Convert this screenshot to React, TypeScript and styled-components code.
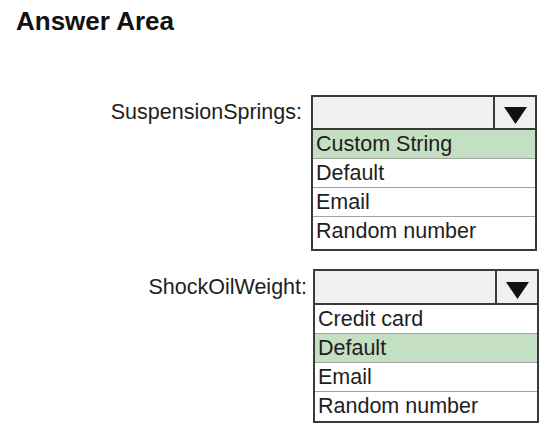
import React from "react";
import styled, { createGlobalStyle } from "styled-components";

const GlobalStyle = createGlobalStyle`
  html, body {
    margin: 0;
    padding: 0;
    background: #ffffff;
  }
  body {
    font-family: "Liberation Sans", Arial, sans-serif;
    color: #1a1a1a;
  }
`;

const Page = styled.div`
  width: 556px;
  height: 434px;
  overflow: hidden;
  background: #ffffff;
`;

const Title = styled.h1`
  margin: 6px 0 0 16px;
  font-size: 26px;
  line-height: 30px;
  font-weight: bold;
  color: #111111;
`;

const Form = styled.div`
  display: flex;
  flex-direction: column;
  gap: 18px;
  padding-top: 59px;
`;

const Field = styled.div<{ $labelWidth: number; $gap: number }>`
  display: grid;
  grid-template-columns: ${(p) => p.$labelWidth}px 226px;
  column-gap: ${(p) => p.$gap}px;
  align-items: center;
`;

const Label = styled.div`
  text-align: right;
  font-size: 21.5px;
  color: #1e1e1e;
  white-space: nowrap;
`;

const Select = styled.div<{ $height: number }>`
  display: flex;
  height: ${(p) => p.$height}px;
  box-sizing: border-box;
  border: 2px solid #3a3a3a;
  background: #f0f0f0;
`;

const SelectValue = styled.div`
  flex: 1;
`;

const SelectButton = styled.div`
  width: 42px;
  border-left: 2px solid #3a3a3a;
  display: flex;
  align-items: center;
  justify-content: center;
  padding-top: 6px;
  box-sizing: border-box;
`;

const List = styled.div<{ $padBottom: number }>`
  grid-column: 2;
  border: 2px solid #3a3a3a;
  border-top: none;
  padding-bottom: ${(p) => p.$padBottom}px;
  background: #ffffff;
`;

const Option = styled.div<{ $selected?: boolean }>`
  height: 28px;
  line-height: 28px;
  padding-left: 3px;
  font-size: 21.5px;
  color: #1e1e1e;
  background: ${(p) => (p.$selected ? "#c4dfc1" : "#ffffff")};
  white-space: nowrap;
  & + & {
    border-top: 1px solid #a3a3a3;
  }
`;

const Arrow = () => (
  <svg width="23" height="17" viewBox="0 0 23 17">
    <polygon points="0,0 23,0 11.5,17" fill="#111111" />
  </svg>
);

type DropdownProps = {
  label: string;
  labelWidth: number;
  gap: number;
  height: number;
  padBottom: number;
  options: string[];
  selected: string;
};

const Dropdown = ({ label, labelWidth, gap, height, padBottom, options, selected }: DropdownProps) => (
  <Field $labelWidth={labelWidth} $gap={gap}>
    <Label>{label}</Label>
    <Select $height={height}>
      <SelectValue />
      <SelectButton>
        <Arrow />
      </SelectButton>
    </Select>
    <List $padBottom={padBottom}>
      {options.map((o) => (
        <Option key={o} $selected={o === selected}>
          {o}
        </Option>
      ))}
    </List>
  </Field>
);

export default function App() {
  return (
    <Page>
      <GlobalStyle />
      <Title>Answer Area</Title>
      <Form>
        <Dropdown
          label="SuspensionSprings:"
          labelWidth={302}
          gap={9}
          height={35}
          padBottom={4}
          options={["Custom String", "Default", "Email", "Random number"]}
          selected="Custom String"
        />
        <Dropdown
          label="ShockOilWeight:"
          labelWidth={307}
          gap={6}
          height={36}
          padBottom={1}
          options={["Credit card", "Default", "Email", "Random number"]}
          selected="Default"
        />
      </Form>
    </Page>
  );
}
